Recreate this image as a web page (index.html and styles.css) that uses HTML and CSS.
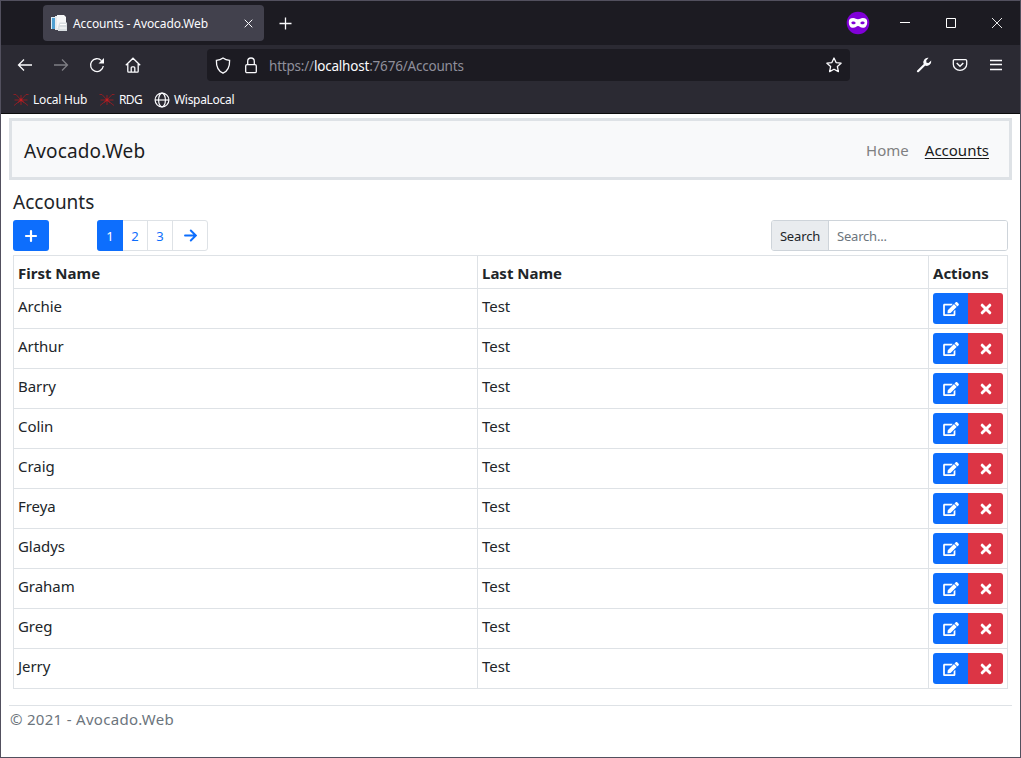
FILE: index.html
```html
<!DOCTYPE html>
<html lang="en">
<head>
<meta charset="utf-8">
<title>Accounts - Avocado.Web</title>
<link rel="stylesheet" href="styles.css">
</head>
<body>
<svg class="defs" width="0" height="0">
  <symbol id="edit" viewBox="0 0 576 512"><path fill="currentColor" d="M402.600 83.200l90.200 90.200c3.800 3.800 3.800 10 0 13.800L274.400 405.600l-92.800 10.300c-12.400 1.400-22.900-9.100-21.500-21.500l10.300-92.800L388.800 83.200c3.800-3.800 10-3.800 13.800 0zm162-22.900l-48.800-48.800c-15.200-15.200-39.900-15.200-55.200 0l-35.400 35.400c-3.800 3.800-3.800 10 0 13.800l90.200 90.200c3.800 3.800 10 3.800 13.800 0l35.400-35.400c15.200-15.300 15.200-40 0-55.200zM384 346.200V448H64V128h229.800c3.200 0 6.200-1.300 8.500-3.500l40-40c7.600-7.600 2.200-20.500-8.500-20.500H48C21.500 64 0 85.500 0 112v352c0 26.500 21.500 48 48 48h352c26.500 0 48-21.500 48-48V306.200c0-10.700-12.900-16-20.500-8.500l-40 40c-2.200 2.300-3.500 5.300-3.500 8.500z"/></symbol>
  <symbol id="times" viewBox="0 0 11 11"><path d="M2 2l7 7M9 2l-7 7" fill="none" stroke="currentColor" stroke-width="2.700" stroke-linecap="round"/></symbol>
  <symbol id="spider" viewBox="0 0 16 16"><g fill="none" stroke="#a81c22"><path d="M.5 2.500h2.500l5 5.500 5-5.500h2.500M1 13.500L8 8l7 5.500" opacity=".75"/><path d="M1.500 8h13M8 3v10" opacity=".8"/><path d="M5 10.500L8 8l3 2.500"/></g><circle cx="8" cy="8" r="1.400" fill="#c21b20"/></symbol>
</svg>
<div class="window">
  <div class="titlebar">
    <div class="tab">
      <svg class="favicon" width="17" height="17" viewBox="0 0 17 17"><path d="M0 2h5v12H0z" fill="#dcebf5"/><path d="M1 3h3v11H1z" fill="#4e9fd2"/><path d="M4 1h9l2 2v12H4z" fill="#e7eaed"/><path d="M6 0h7l2 2v11H6z" fill="#f6f7f8"/><path d="M8.500 7.500H16V16H7v-4z" fill="#d9dee2"/><path d="M9 9.500h6M8.500 13h7" stroke="#fff"/></svg>
      <span class="tab-title">Accounts - Avocado.Web</span>
      <svg width="9" height="9" viewBox="0 0 9 9"><path d="M.7.7l7.600 7.600M8.300.7L.7 8.300" stroke="#fbfbfe" stroke-width="1"/></svg>
    </div>
    <svg class="new-tab" width="13" height="13" viewBox="0 0 13 13"><path d="M6.500.5v12M.5 6.500h12" stroke="#fbfbfe" stroke-width="1.300"/></svg>
    <svg class="private" width="24" height="24" viewBox="0 0 24 24"><circle cx="12" cy="12" r="11.300" fill="#8000d7"/><path d="M7.200 7C4 7 2.800 8.500 2.800 11c0 3.500 1.500 5.800 4.300 5.800 2.600 0 3.300-1.900 4.900-1.900s2.300 1.900 4.900 1.900c2.800 0 4.300-2.300 4.300-5.800 0-2.500-1.200-4-4.400-4-2.200 0-3 1.300-4.800 1.300S9.400 7 7.200 7z" fill="#fff"/><path d="M5.200 11.800c1-1.900 3.700-1.900 4.700.2-1.200 1.800-3.600 1.800-4.700-.2zM14.100 12c1-2.100 3.700-2.100 4.700-.2-1.100 2-3.500 2-4.700.2z" fill="#8000d7"/></svg>
    <div class="controls">
      <svg width="10" height="10"><path d="M0 4.500h10" stroke="#fff"/></svg>
      <svg width="10" height="10"><path d="M.5.5h9v9h-9z" fill="none" stroke="#fff"/></svg>
      <svg width="10" height="10"><path d="M0 0l10 10M10 0L0 10" stroke="#fff" stroke-width=".9"/></svg>
    </div>
  </div>
  <div class="toolbar">
    <div class="nav-buttons">
      <svg width="16" height="16" viewBox="0 0 16 16"><path d="M15 8H1.500M7 2.500L1.500 8 7 13.500"/></svg>
      <svg class="disabled" width="16" height="16" viewBox="0 0 16 16"><path d="M1 8h13.500M9 2.500L14.500 8 9 13.500"/></svg>
      <svg width="16" height="16" viewBox="0 0 16 16"><path d="M14.300 9A6.400 6.400 0 1 1 12.500 3.600"/><path d="M15 1v5.500H9.500z" fill="currentColor" stroke="none"/></svg>
      <svg width="16" height="16" viewBox="0 0 16 16"><path d="M.8 8.200L8 1.200l7.200 7M2.800 7v7.200c0 .6.400.9.900.9h8.600c.5 0 .9-.3.900-.9V7M6.200 15v-4.200c0-.6.400-1 1-1h1.600c.6 0 1 .4 1 1V15"/></svg>
    </div>
    <div class="urlbar">
      <svg width="16" height="17" viewBox="0 0 16 17"><path d="M8 1c2 1.400 4.200 2.100 6.600 2.400.2 6-1.600 10.400-6.600 12.800C3 13.800 1.200 9.400 1.400 3.400 3.800 3.100 6 2.400 8 1z"/></svg>
      <svg width="14" height="17" viewBox="0 0 14 17"><rect x="1.700" y="7.700" width="10.600" height="8" rx="1.300"/><path d="M3.700 7.500V4.300C3.700 2.300 5.100 1 7 1s3.300 1.300 3.300 3.300v3.200"/></svg>
      <span class="url">https://<b>localhost</b>:7676/Accounts</span>
      <svg class="star" width="16" height="16" viewBox="0 0 16 16"><path d="M8 1l2.100 4.600 5 .6-3.700 3.400 1 5L8 12.200l-4.400 2.400 1-5L.9 6.200l5-.6z" stroke-linejoin="round"/></svg>
    </div>
    <div class="tools">
      <svg width="16" height="16" viewBox="0 0 16 16"><path d="M2 14.200L9.300 7" stroke-width="2.200" stroke-linecap="round"/><path d="M12.600.8A4.500 4.500 0 0 0 7.700 7l1.500 1.600a4.500 4.500 0 0 0 6-5l-2.700 2.300-2-.2-.3-2.200z" fill="currentColor" stroke="none"/></svg>
      <svg width="16" height="16" viewBox="0 0 16 16"><path d="M2.500 2.600h11c.7 0 1.200.5 1.200 1.200v3.400a6.700 6.200 0 0 1-13.400 0V3.800c0-.7.500-1.200 1.200-1.200z"/><path d="M4.700 6L8 9.200 11.300 6" stroke-width="1.500"/></svg>
      <svg width="16" height="16" viewBox="0 0 16 16"><path d="M2 3.500h12M2 7.500h12M2 12.500h12"/></svg>
    </div>
  </div>
  <div class="bookmarks">
    <span class="bookmark"><svg width="16" height="16"><use href="#spider"/></svg><span class="bm-hub">Local Hub</span></span>
    <span class="bookmark"><svg width="16" height="16"><use href="#spider"/></svg><span class="bm-rdg">RDG</span></span>
    <span class="bookmark"><svg width="16" height="16" viewBox="0 0 16 16" fill="none" stroke="#fbfbfe" stroke-width="1.200"><circle cx="8" cy="8" r="6.900"/><ellipse cx="8" cy="8" rx="3.400" ry="6.900"/><path d="M1 8h14"/></svg><span class="bm-wispa">WispaLocal</span></span>
  </div>
  <div class="page">
    <header class="navbar">
      <span class="brand">Avocado.Web</span>
      <nav class="links"><a class="home">Home</a><a class="active">Accounts</a></nav>
    </header>
    <main class="content">
      <h1 class="heading">Accounts</h1>
      <div class="actions-bar">
        <button class="add"><svg width="14" height="14" viewBox="0 0 14 14"><path d="M7 2v10M2 7h10" stroke="#fff" stroke-width="2.200" stroke-linecap="round"/></svg></button>
        <div class="pagination">
          <span class="page-item current">1</span><span class="page-item">2</span><span class="page-item">3</span>
          <span class="page-item next"><svg width="13" height="13" viewBox="0 0 13 13"><path d="M1 6.500h10.500M6.800 1.500l5 5-5 5" fill="none" stroke="#0d6efd" stroke-width="1.900" stroke-linecap="round"/></svg></span>
        </div>
        <div class="search"><label class="search-label" for="search"><span>Search</span></label><input class="search-input" id="search" placeholder="Search..."></div>
      </div>
      <table class="accounts">
        <colgroup><col class="col-first"><col class="col-last"><col class="col-actions"></colgroup>
        <thead><tr><th>First Name</th><th>Last Name</th><th>Actions</th></tr></thead>
        <tbody>
          <tr><td>Archie</td><td>Test</td><td><div class="group"><button class="edit"><svg width="16" height="14"><use href="#edit"/></svg></button><button class="delete"><svg width="12" height="12"><use href="#times"/></svg></button></div></td></tr>
          <tr><td>Arthur</td><td>Test</td><td><div class="group"><button class="edit"><svg width="16" height="14"><use href="#edit"/></svg></button><button class="delete"><svg width="12" height="12"><use href="#times"/></svg></button></div></td></tr>
          <tr><td>Barry</td><td>Test</td><td><div class="group"><button class="edit"><svg width="16" height="14"><use href="#edit"/></svg></button><button class="delete"><svg width="12" height="12"><use href="#times"/></svg></button></div></td></tr>
          <tr><td>Colin</td><td>Test</td><td><div class="group"><button class="edit"><svg width="16" height="14"><use href="#edit"/></svg></button><button class="delete"><svg width="12" height="12"><use href="#times"/></svg></button></div></td></tr>
          <tr><td>Craig</td><td>Test</td><td><div class="group"><button class="edit"><svg width="16" height="14"><use href="#edit"/></svg></button><button class="delete"><svg width="12" height="12"><use href="#times"/></svg></button></div></td></tr>
          <tr><td>Freya</td><td>Test</td><td><div class="group"><button class="edit"><svg width="16" height="14"><use href="#edit"/></svg></button><button class="delete"><svg width="12" height="12"><use href="#times"/></svg></button></div></td></tr>
          <tr><td>Gladys</td><td>Test</td><td><div class="group"><button class="edit"><svg width="16" height="14"><use href="#edit"/></svg></button><button class="delete"><svg width="12" height="12"><use href="#times"/></svg></button></div></td></tr>
          <tr><td>Graham</td><td>Test</td><td><div class="group"><button class="edit"><svg width="16" height="14"><use href="#edit"/></svg></button><button class="delete"><svg width="12" height="12"><use href="#times"/></svg></button></div></td></tr>
          <tr><td>Greg</td><td>Test</td><td><div class="group"><button class="edit"><svg width="16" height="14"><use href="#edit"/></svg></button><button class="delete"><svg width="12" height="12"><use href="#times"/></svg></button></div></td></tr>
          <tr><td>Jerry</td><td>Test</td><td><div class="group"><button class="edit"><svg width="16" height="14"><use href="#edit"/></svg></button><button class="delete"><svg width="12" height="12"><use href="#times"/></svg></button></div></td></tr>
        </tbody>
      </table>
    </main>
    <footer class="footer"><span>© 2021 - Avocado.Web</span></footer>
  </div>
</div>
</body>
</html>
```
FILE: styles.css
```css
* { box-sizing: border-box; }
body { margin: 0; font: 15px/24px "Noto Sans", "Open Sans", sans-serif; color: #212529; }
svg { display: block; flex: none; }
.defs { position: absolute; }
button { border: 0; padding: 0; display: flex; align-items: center; justify-content: center; color: #fff; }

.window { width: 1021px; height: 758px; border: 1px solid #52505e; display: flex; flex-direction: column; background: #fff; overflow: hidden; }

.titlebar { height: 44px; background: #1c1b22; display: flex; align-items: center; padding: 0 18px 0 42px; flex: none; }
.tab { width: 221px; height: 36px; border-radius: 4px; background: #42414d; color: #fbfbfe; display: flex; align-items: center; padding: 0 11px 0 8px; font-size: 12px; }
.tab-title { flex: 1; margin: 1px 0 0 5px; letter-spacing: -.1px; white-space: nowrap; }
.new-tab { margin-left: 15px; }
.private { margin-left: auto; }
.controls { display: flex; gap: 36px; margin-left: 30px; }

.toolbar { height: 40px; background: #2b2a33; display: flex; align-items: center; padding: 0 16px 0 16px; flex: none; color: #fbfbfe; }
.toolbar svg { fill: none; stroke: currentColor; stroke-width: 1.300; }
.nav-buttons { display: flex; gap: 20px; }
.nav-buttons .disabled { opacity: .4; }
.urlbar { width: 643px; height: 32px; margin-left: 66px; background: #1c1b22; border-radius: 4px; display: flex; align-items: center; padding: 0 8px; }
.urlbar svg + svg { margin-left: 13px; }
.url { margin: 1px 0 0 11px; font-size: 13.500px; color: #8f8f9b; flex: 1; letter-spacing: -.2px; }
.url b { font-weight: 400; color: #fbfbfe; }
.tools { display: flex; gap: 20px; margin-left: auto; }

.bookmarks { height: 29px; background: #2b2a33; border-bottom: 1px solid #0c0c0d; display: flex; gap: 12px; padding-left: 12px; color: #fbfbfe; font-size: 12px; flex: none; }
.bookmark { display: flex; align-items: center; gap: 4px; height: 29px; white-space: nowrap; }
.bm-hub { width: 54px; letter-spacing: -.2px; }
.bm-rdg { width: 23px; letter-spacing: -.6px; }
.bm-wispa { letter-spacing: -.3px; }

.page { padding: 4px 8px 0; }
.navbar { height: 62px; border: 3px solid #dee2e6; background: #f8f9fa; display: flex; align-items: center; justify-content: space-between; padding: 3px 20px 0 12px; }
.brand { font-size: 19px; color: #1c1d1e; letter-spacing: .12px; }
.links { display: flex; gap: 16px; padding-bottom: 2px; }
.home { color: #7f8081; }
.active { color: #1a1a1b; text-decoration: underline; text-underline-offset: 2px; }

.content { padding: 10px 4px 0; }
.heading { margin: 0 0 6px; font-size: 19px; font-weight: 400; line-height: 24px; }
.actions-bar { display: flex; height: 31px; margin-bottom: 4px; font-size: 13px; }
.add { width: 36px; border-radius: 3px; background: #0d6efd; }
.pagination { display: flex; margin-left: 48px; border: 1px solid #dee2e6; border-radius: 3px; width: 111px; color: #0d6efd; }
.page-item { width: 25px; border-right: 1px solid #dee2e6; display: flex; align-items: center; justify-content: center; }
.current { width: 26px; margin: -1px 0 -1px -1px; background: #0d6efd; border: 0; border-radius: 3px 0 0 3px; color: #fff; }
.next { width: 34px; border: 0; }
.search { display: flex; width: 237px; margin-left: auto; border: 1px solid #ced4da; border-radius: 3px; overflow: hidden; }
.search-label { width: 57px; background: #e9ecef; border-right: 1px solid #ced4da; display: flex; align-items: center; justify-content: center; letter-spacing: -.15px; }
.search-input { flex: 1; min-width: 0; border: 0; padding: 0 8px; font: inherit; letter-spacing: -.2px; }
.search-input::placeholder { color: #6c757d; opacity: 1; }

.accounts { border-collapse: collapse; table-layout: fixed; width: 995px; }
.col-first { width: 464px; }
.col-last { width: 451px; }
.accounts th, .accounts td { border: 1px solid #dee2e6; padding: 5px 4px 3px; height: 40px; text-align: left; vertical-align: top; }
.accounts td:last-child { padding: 4px; }
.accounts td { letter-spacing: -.05px; }
.accounts th { height: 33px; }
.group { display: flex; height: 31px; }
.group button { width: 35px; }
.edit { background: #0d6efd; border-radius: 3px 0 0 3px; padding-top: 1px; }
.delete { background: #dc3545; border-radius: 0 3px 3px 0; padding-top: 1px; }

.footer { margin-top: 16px; border-top: 1px solid #dee2e6; color: #6c757d; padding: 1px; letter-spacing: .3px; }
```
